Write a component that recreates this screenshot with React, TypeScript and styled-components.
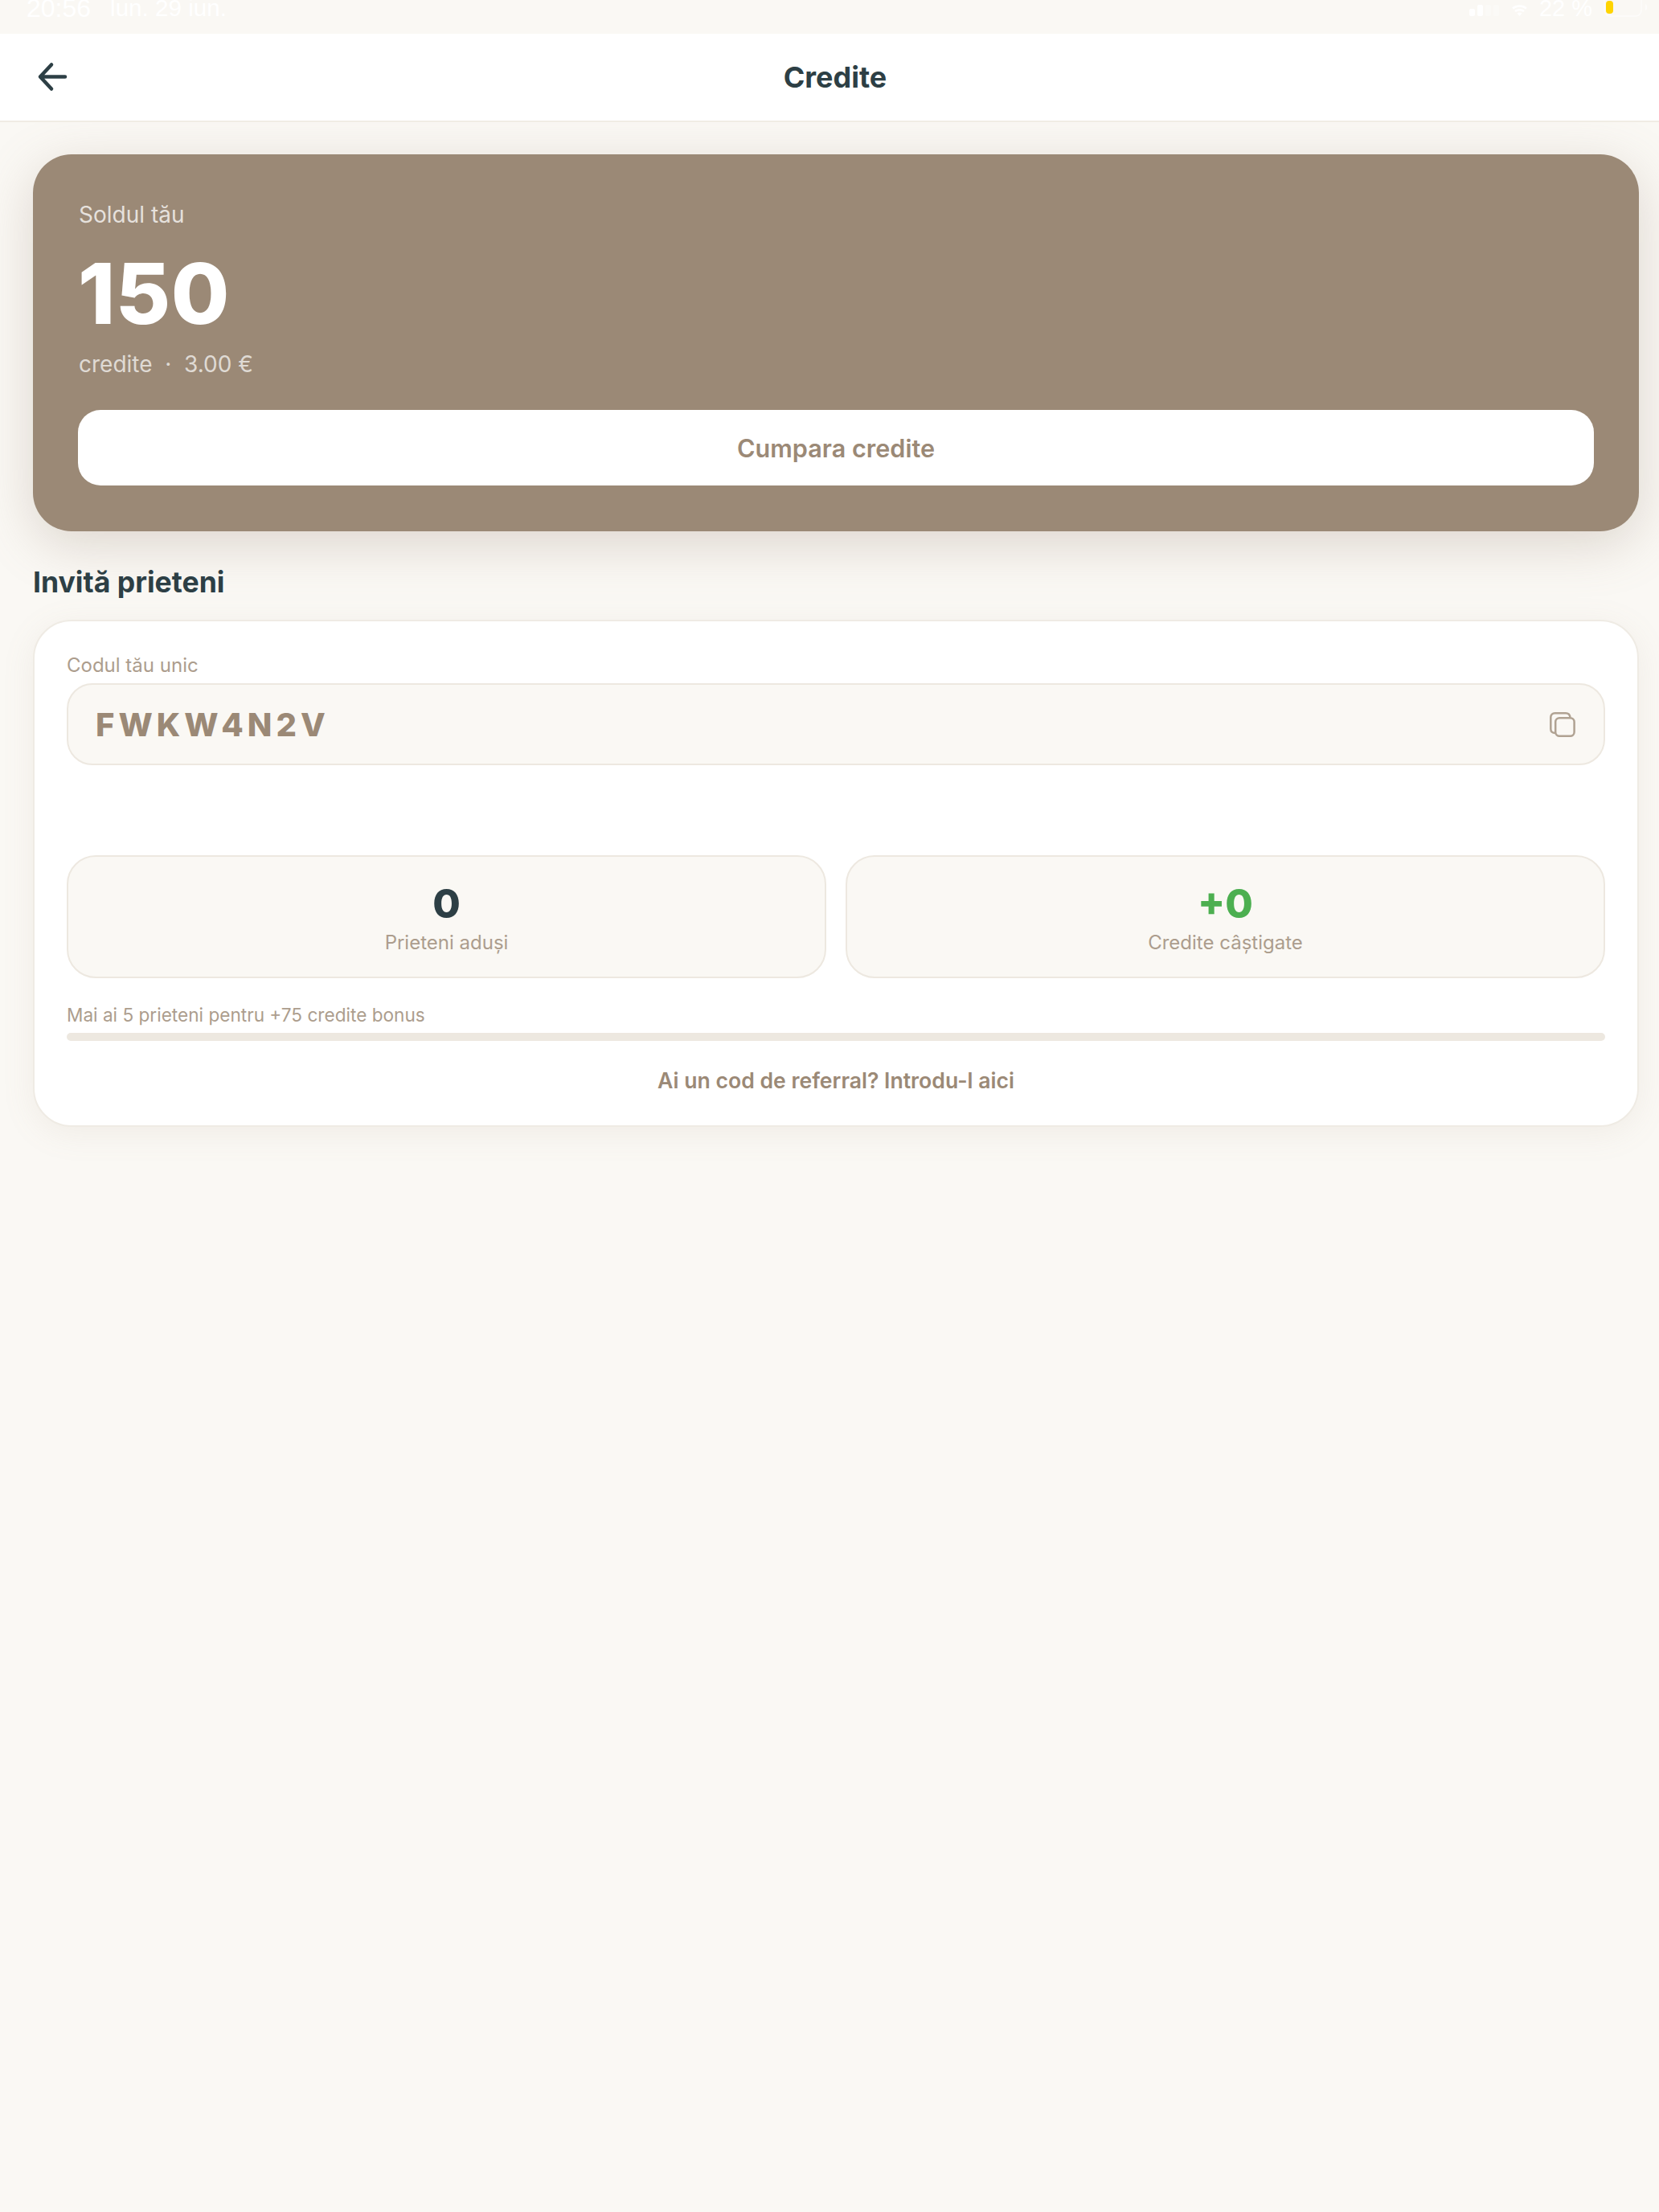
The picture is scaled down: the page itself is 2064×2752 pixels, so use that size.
import React from "react";
import styled, { createGlobalStyle } from "styled-components";

const GlobalStyle = createGlobalStyle`
  html, body {
    margin: 0;
    padding: 0;
    background: #faf8f4;
  }
  * {
    box-sizing: border-box;
  }
`;

const Page = styled.div`
  width: 2064px;
  height: 2752px;
  background: #faf8f4;
  font-family: Inter, "Noto Sans", sans-serif;
  overflow: hidden;
`;

const StatusBar = styled.div`
  height: 42px;
  padding: 0 14px 22px 33px;
  display: flex;
  align-items: flex-end;
  justify-content: space-between;
  color: #fff;
  font-family: "Liberation Sans", Arial, sans-serif;
  line-height: 20px;
`;

const StatusGroup = styled.div<{ $gap: number }>`
  display: flex;
  align-items: flex-end;
  gap: ${({ $gap }) => $gap}px;
`;

const StatusText = styled.span<{ $size: number }>`
  font-size: ${({ $size }) => $size}px;
`;

const BatterySvg = styled.svg`
  margin-bottom: -1px;
  margin-left: -2px;
  overflow: hidden;
`;

const Header = styled.header`
  height: 110px;
  padding-left: 14px;
  background: #fff;
  border-bottom: 2px solid #f0ece4;
  display: flex;
  align-items: center;
  justify-content: center;
  position: relative;
  z-index: 1;
`;

const BackButton = styled.button`
  position: absolute;
  left: 46px;
  top: 34px;
  width: 38px;
  height: 38px;
  padding: 0;
  border: 0;
  background: none;
  color: #2d3f45;
`;

const Title = styled.h1`
  margin: 0;
  font-size: 36px;
  font-weight: 700;
  color: #2d3f45;
`;

const Content = styled.main`
  padding: 40px 25px 0 41px;
`;

const BalanceCard = styled.section`
  height: 469px;
  padding: 58px 56px 57px;
  border-radius: 48px;
  background: #9b8976;
  box-shadow: 0 16px 64px rgba(155, 137, 118, 0.3);
  display: flex;
  flex-direction: column;
`;

const BalanceLabel = styled.div`
  padding-left: 1px;
  font-size: 28px;
  line-height: 34px;
  color: rgba(255, 255, 255, 0.75);
`;

const BalanceValue = styled.div`
  margin-top: 25px;
  font-size: 105px;
  line-height: 112px;
  font-weight: 800;
  letter-spacing: 0.5px;
  color: #fff;
`;

const BalanceSub = styled.div`
  margin-top: 15px;
  padding-left: 1px;
  font-size: 28px;
  line-height: 34px;
  color: rgba(255, 255, 255, 0.7);
  white-space: pre;
`;

const BuyButton = styled.button`
  margin-top: auto;
  height: 94px;
  border: 0;
  border-radius: 28px;
  background: #fff;
  color: #9b8976;
  font-family: Inter, sans-serif;
  font-size: 30.6px;
  font-weight: 600;
`;

const SectionTitle = styled.h2`
  margin: 42px 0 0;
  font-size: 35.6px;
  line-height: 44px;
  font-weight: 700;
  color: #2d3f45;
`;

const InviteCard = styled.section`
  margin-top: 24px;
  height: 631px;
  padding: 40px;
  border: 2px solid #efebe4;
  border-radius: 48px;
  background: #fff;
  box-shadow: 0 8px 40px rgba(155, 137, 118, 0.1);
`;

const CodeLabel = styled.div`
  font-size: 24px;
  line-height: 30px;
  color: #ac9d8d;
`;

const CodeBox = styled.div`
  margin-top: 7px;
  height: 102px;
  padding: 0 35px 0 34px;
  border: 2px solid #ede8e0;
  border-radius: 32px;
  background: #faf8f4;
  display: flex;
  align-items: center;
  justify-content: space-between;
`;

const CodeText = styled.span`
  font-size: 40px;
  font-weight: 800;
  letter-spacing: 5px;
  color: #9b8976;
`;

const StatsRow = styled.div`
  margin-top: 112px;
  display: grid;
  grid-template-columns: 1fr 1fr;
  gap: 24px;
`;

const StatBox = styled.div`
  height: 153px;
  padding-top: 30px;
  border: 2px solid #ede8e0;
  border-radius: 36px;
  background: #faf8f4;
  text-align: center;
`;

const StatValue = styled.div<{ $accent?: boolean }>`
  font-size: 50px;
  line-height: 56px;
  font-weight: 800;
  color: ${({ $accent }) => ($accent ? "#4caf50" : "#2d3f45")};
`;

const StatLabel = styled.div`
  margin-top: 5px;
  font-size: 24px;
  line-height: 32px;
  color: #ac9d8d;
`;

const ProgressLabel = styled.div`
  margin-top: 31px;
  font-size: 22.6px;
  line-height: 30px;
  color: #ac9d8d;
`;

const ProgressTrack = styled.div`
  margin-top: 7px;
  height: 10px;
  border-radius: 5px;
  background: #ede8e0;
`;

const ReferralLink = styled.div`
  margin-top: 32px;
  font-size: 26.6px;
  line-height: 34px;
  font-weight: 600;
  text-align: center;
  color: #9b8976;
`;

function SignalIcon() {
  return (
    <svg width="38" height="14" viewBox="0 0 38 14" fill="#fff">
      <rect x="0" y="5" width="7" height="9" rx="2" />
      <rect x="10" y="0" width="7" height="14" rx="2" />
      <rect x="20" y="0" width="7" height="14" rx="2" opacity="0.3" />
      <rect x="30" y="0" width="7" height="14" rx="2" opacity="0.3" />
    </svg>
  );
}

function WifiIcon() {
  return (
    <svg width="19" height="14" viewBox="0 0 19 14" fill="none" stroke="#fff" strokeWidth="2.500">
      <path d="M1 4.500c5-4 12-4 17 0M4 8c3-2.500 8-2.500 11 0" />
      <path d="M9.500 14l-3-3.500c1.700-1.200 4.300-1.200 6 0z" fill="#fff" stroke="none" />
    </svg>
  );
}

function BatteryIcon() {
  return (
    <BatterySvg width="56" height="22" viewBox="0 0 56 22" fill="none">
      <rect x="2" y="-6" width="46" height="27" rx="7" stroke="#fff" strokeOpacity="0.6" strokeWidth="1.500" />
      <rect x="4" y="2" width="9" height="16" rx="4" fill="#ffd400" />
      <path d="M53 6c3 1 3 7 0 8z" fill="#fff" fillOpacity="0.6" />
    </BatterySvg>
  );
}

function BackIcon() {
  return (
    <svg width="38" height="38" viewBox="0 0 38 38" fill="none" stroke="currentColor" strokeWidth="4.500" strokeLinecap="round" strokeLinejoin="round">
      <path d="M35 19.500H4M18 4.500L4 19.500l14 15" />
    </svg>
  );
}

function CopyIcon() {
  return (
    <svg width="32" height="31" viewBox="0 0 32 31" fill="none" stroke="#b0a292" strokeWidth="2.500">
      <rect x="7.200" y="7.200" width="23.400" height="22.600" rx="5" />
      <path d="M7 26C3 26 1.300 24 1.300 21V6.500C1.300 3 3.500 1.300 6.500 1.300H20C23 1.300 25 3 25.500 6.500" />
    </svg>
  );
}

export default function App() {
  return (
    <Page>
      <GlobalStyle />
      <StatusBar>
        <StatusGroup $gap={24}>
          <StatusText $size={32}>20:56</StatusText>
          <StatusText $size={29.6}>lun. 29 iun.</StatusText>
        </StatusGroup>
        <StatusGroup $gap={15}>
          <SignalIcon />
          <WifiIcon />
          <StatusText $size={29}>22 %</StatusText>
          <BatteryIcon />
        </StatusGroup>
      </StatusBar>
      <Header>
        <BackButton aria-label="Înapoi">
          <BackIcon />
        </BackButton>
        <Title>Credite</Title>
      </Header>
      <Content>
        <BalanceCard>
          <BalanceLabel>Soldul tău</BalanceLabel>
          <BalanceValue>150</BalanceValue>
          <BalanceSub>credite  ·  3.00 €</BalanceSub>
          <BuyButton>Cumpara credite</BuyButton>
        </BalanceCard>
        <SectionTitle>Invită prieteni</SectionTitle>
        <InviteCard>
          <CodeLabel>Codul tău unic</CodeLabel>
          <CodeBox>
            <CodeText>FWKW4N2V</CodeText>
            <CopyIcon />
          </CodeBox>
          <StatsRow>
            <StatBox>
              <StatValue>0</StatValue>
              <StatLabel>Prieteni aduși</StatLabel>
            </StatBox>
            <StatBox>
              <StatValue $accent>+0</StatValue>
              <StatLabel>Credite câștigate</StatLabel>
            </StatBox>
          </StatsRow>
          <ProgressLabel>Mai ai 5 prieteni pentru +75 credite bonus</ProgressLabel>
          <ProgressTrack />
          <ReferralLink>Ai un cod de referral? Introdu-l aici</ReferralLink>
        </InviteCard>
      </Content>
    </Page>
  );
}
